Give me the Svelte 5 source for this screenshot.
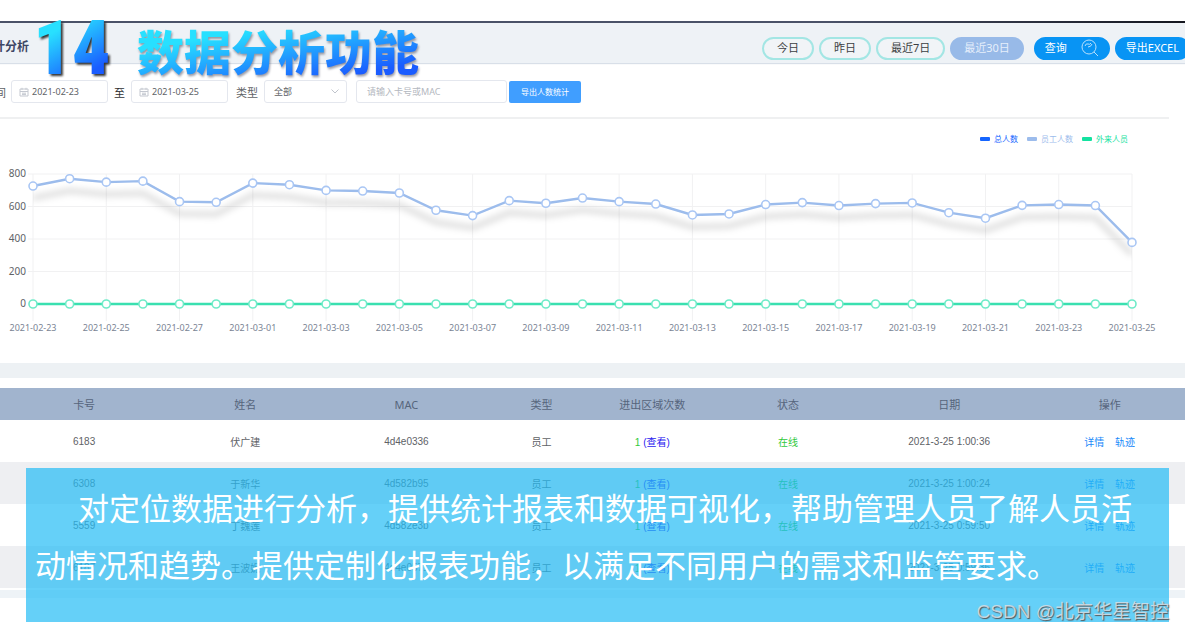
<script lang="ts">
  const ranges = ["今日", "昨日", "最近7日", "最近30日"];
  let activeRange = $state("最近30日");

  const legend = [
    { label: "总人数", color: "#1565ff" },
    { label: "员工人数", color: "#9cbcec" },
    { label: "外来人员", color: "#14e2a0" },
  ];

  const employees = [
    726, 771, 750, 756, 630, 626, 744, 734, 699, 695, 683, 577, 544, 636, 620,
    652, 630, 615, 548, 554, 612, 624, 606, 618, 622, 562, 528, 607, 612, 606,
    379,
  ];
  const visitors = employees.map(() => 0);
  const ticks = [800, 600, 400, 200, 0];

  const left = 33;
  const right = 1132;
  const top = 24;
  const bottom = 154;

  const x = (i: number) =>
    left + ((right - left) * i) / (employees.length - 1);
  const y = (value: number) => bottom - ((bottom - top) * value) / 800;
  const line = (values: number[]) =>
    values.map((v, i) => `${x(i)},${y(v)}`).join(" ");

  function dateLabel(i: number) {
    const date = new Date(Date.UTC(2021, 1, 23 + i));
    return date.toISOString().slice(0, 10);
  }

  const columns = [
    { title: "卡号", share: 14.2 },
    { title: "姓名", share: 13 },
    { title: "MAC", share: 14.2 },
    { title: "类型", share: 8.6 },
    { title: "进出区域次数", share: 10.1 },
    { title: "状态", share: 12.8 },
    { title: "日期", share: 14.4 },
    { title: "操作", share: 12.7 },
  ];
  const rows = [
    { card: "6183", name: "伏广建", mac: "4d4e0336", date: "2021-3-25 1:00:36" },
    { card: "6308", name: "于新华", mac: "4d582b95", date: "2021-3-25 1:00:24" },
    { card: "5559", name: "丁魏莲", mac: "4d582e3b", date: "2021-3-25 0:59:50" },
    { card: "6187", name: "王波妮", mac: "4d4e0571", date: "2021-3-25 0:59:36" },
  ];
</script>

{#snippet calendar()}
  <svg class="calendar" viewBox="0 0 10 10" aria-hidden="true">
    <path d="M1 2h8v7H1zM1 4.500h8M3 .8v2M7 .8v2M3 6.200h4M3 7.600h4" />
  </svg>
{/snippet}

<div class="page">
  <header class="topbar">
    <h1>统计分析</h1>
    <div class="actions">
      {#each ranges as range}
        <button
          type="button"
          class={["pill", activeRange === range && "active"]}
          onclick={() => (activeRange = range)}>{range}</button
        >
      {/each}
      <button type="button" class="pill primary search">
        查询
        <svg viewBox="0 0 18 18" aria-hidden="true">
          <circle cx="8" cy="8" r="7" />
          <path d="M13 13l4 4M4 7q1-3 3-2t3-1M7 8q3 0 4-3" />
        </svg>
      </button>
      <button type="button" class="pill primary export">导出EXCEL</button>
    </div>
  </header>

  <form class="filters" onsubmit={(e) => e.preventDefault()}>
    <label class="first" for="from">时间</label>
    <div class="field date">
      {@render calendar()}
      <input id="from" type="text" value="2021-02-23" />
    </div>
    <label class="to" for="until">至</label>
    <div class="field date">
      {@render calendar()}
      <input id="until" type="text" value="2021-03-25" />
    </div>
    <label class="type" for="type">类型</label>
    <div class="field kind">
      <select id="type">
        <option>全部</option>
      </select>
      <svg class="chevron" viewBox="0 0 8 5" aria-hidden="true">
        <path d="M.5.5 4 4 7.500.5" />
      </svg>
    </div>
    <div class="field keyword">
      <input type="text" placeholder="请输入卡号或MAC" aria-label="卡号或MAC" />
    </div>
    <button type="submit" class="count">导出人数统计</button>
  </form>

  <section class="chart">
    <ul class="legend">
      {#each legend as item}
        <li style:color={item.color}><i></i>{item.label}</li>
      {/each}
    </ul>
    <svg viewBox="0 0 1185 213" role="img" aria-label="人数趋势">
      <defs>
        <filter id="soft" x="-5%" y="-50%" width="110%" height="250%">
          <feGaussianBlur stdDeviation="3" />
        </filter>
        <clipPath id="plot">
          <rect x={left} y="0" width={right - left} height="180" />
        </clipPath>
      </defs>
      <g class="grid">
        {#each ticks as tick}
          <line x1={left - 5} x2={right} y1={y(tick)} y2={y(tick)} />
          <text x="26" y={y(tick) + 3} text-anchor="end">{tick}</text>
        {/each}
        {#each employees as _, i}
          {#if i % 2 === 0}
            <line x1={x(i)} x2={x(i)} y1={top} y2="171" />
            <text class="day" x={x(i)} y="181" text-anchor="middle"
              >{dateLabel(i)}</text
            >
          {/if}
        {/each}
      </g>
      <g clip-path="url(#plot)">
        <g filter="url(#soft)">
          <polyline
            class="shadow"
            points={line(employees)}
            transform="translate(0 12)"
          />
        </g>
      </g>
      <g class="series employees">
        <polyline points={line(employees)} />
        {#each employees as value, i}
          <circle cx={x(i)} cy={y(value)} r="4" />
        {/each}
      </g>
      <g class="series visitors">
        <polyline points={line(visitors)} />
        {#each visitors as value, i}
          <circle cx={x(i)} cy={y(value)} r="4" />
        {/each}
      </g>
    </svg>
  </section>

  <section class="records">
    <table>
      <colgroup>
        {#each columns as column}
          <col style:width="{column.share}%" />
        {/each}
      </colgroup>
      <thead>
        <tr>
          {#each columns as column}
            <th scope="col">{column.title}</th>
          {/each}
        </tr>
      </thead>
      <tbody>
        {#each rows as row}
          <tr>
            <td>{row.card}</td>
            <td>{row.name}</td>
            <td>{row.mac}</td>
            <td>员工</td>
            <td class="online">1 <a class="view" href="#view">(查看)</a></td>
            <td class="online">在线</td>
            <td>{row.date}</td>
            <td class="links">
              <a href="#detail">详情</a>
              <a href="#track">轨迹</a>
            </td>
          </tr>
        {/each}
      </tbody>
    </table>
  </section>

  <div class="banner">
    <span class="number">14</span>
    <h2>数据分析功能</h2>
  </div>

  <div class="caption">
    <p>
      对定位数据进行分析，提供统计报表和数据可视化，帮助管理人员了解人员活动情况和趋势。提供定制化报表功能，以满足不同用户的需求和监管要求。
    </p>
  </div>

  <div class="watermark">CSDN @北京华星智控</div>
</div>

<style>
  :global(body) {
    margin: 0;
    background: #fff;
  }

  .page {
    position: relative;
    min-height: 100vh;
    padding-top: 21px;
    box-sizing: border-box;
    overflow: hidden;
    color: #606266;
    font-family: "Noto Sans", "Noto Sans CJK SC", sans-serif;
  }

  button,
  input,
  select {
    font-family: inherit;
  }

  .topbar {
    display: flex;
    align-items: center;
    justify-content: space-between;
    height: 40px;
    background: #eef2f6;
    border-top: 2px solid;
    border-image: linear-gradient(90deg, #4a5268 70%, #14161f) 1;
    box-shadow: 0 1px 1px #d8dfe8;
  }
  h1 {
    margin: 0 0 0 -19px;
    padding-top: 8px;
    font-size: 12px;
    font-weight: 700;
    line-height: 20px;
    color: #3d4664;
  }
  .actions {
    display: flex;
    gap: 5px;
    margin-right: -5px;
    padding-top: 10px;
  }
  .pill {
    box-sizing: border-box;
    min-width: 52px;
    height: 23px;
    padding: 0 13px;
    border: 2px solid #a3e6e4;
    border-radius: 12px;
    background: #f1f4f7;
    color: #3c3f44;
    font-size: 11px;
    line-height: 18px;
    white-space: nowrap;
  }
  .pill.active {
    padding: 0 12px;
    background: #98bae8;
    border-color: #98bae8;
    color: #e6effb;
  }
  .pill.primary {
    background: #0894f4;
    border-color: #0894f4;
    color: #fff;
    padding: 0 9px;
  }
  .search {
    display: flex;
    align-items: center;
    gap: 14px;
    margin-left: 5px;
  }
  .search svg {
    width: 18px;
    height: 18px;
    fill: none;
    stroke: #b9e0fc;
  }

  .filters {
    display: flex;
    align-items: center;
    height: 51px;
    margin-right: 16px;
    padding-top: 3px;
    border-bottom: 2px solid #eff0f1;
    font-size: 11px;
  }
  label {
    color: #606266;
  }
  .first {
    margin: 0 5px 0 -16px;
  }
  .to {
    margin: 0 6px;
    color: #303133;
  }
  .type {
    margin: 0 6px 0 8px;
  }
  .field {
    display: flex;
    align-items: center;
    box-sizing: border-box;
    height: 23px;
    border: 1px solid #e4e7ee;
    border-radius: 3px;
    background: #fff;
  }
  .field input,
  .field select {
    width: 100%;
    min-width: 0;
    padding: 0;
    border: 0;
    outline: 0;
    background: none;
    color: #606266;
    font-size: 9px;
  }
  .field select {
    appearance: none;
  }
  .field input::placeholder {
    color: #b4b8c0;
  }
  .date {
    width: 97px;
    padding-left: 7px;
    gap: 3px;
  }
  .kind {
    width: 83px;
    padding: 0 7px 0 9px;
  }
  .keyword {
    width: 151px;
    margin: 0 2px 0 9px;
    padding-left: 10px;
  }
  .calendar {
    flex: none;
    width: 10px;
    height: 10px;
    fill: none;
    stroke: #c4c8d0;
  }
  .chevron {
    flex: none;
    width: 8px;
    height: 5px;
    fill: none;
    stroke: #c0c4cc;
  }
  .count {
    height: 22px;
    padding: 0 12px;
    border: 0;
    border-radius: 2px;
    background: #409eff;
    color: #fff;
    font-size: 8px;
  }

  .legend {
    display: flex;
    justify-content: flex-end;
    gap: 9px;
    margin: 0;
    padding: 14px 57px 0 0;
    list-style: none;
    font-size: 8px;
    line-height: 12px;
  }
  .legend li {
    display: flex;
    align-items: center;
    gap: 4px;
  }
  .legend i {
    width: 10px;
    height: 4px;
    border-radius: 1px;
    background: currentColor;
  }
  .chart > svg {
    display: block;
    width: 100%;
    margin-top: 5px;
  }
  .grid line {
    stroke: #f1f1f2;
  }
  .grid text {
    fill: #606266;
    font-size: 10px;
  }
  .grid .day {
    fill: #7a8494;
    font-size: 9px;
  }
  .shadow {
    fill: none;
    stroke: #000;
    stroke-width: 6;
    opacity: 0.12;
  }
  .series polyline {
    fill: none;
    stroke-width: 2.4;
  }
  .series circle {
    fill: #fff;
    stroke-width: 1.6;
  }
  .employees {
    stroke: #9cbcec;
  }
  .employees circle {
    stroke: #a9c6f4;
  }
  .visitors {
    stroke: #3ae0b0;
  }
  .visitors circle {
    stroke: #6febc8;
  }

  .records {
    padding: 10px 0 2px;
    border-top: 15px solid #edf1f4;
    border-bottom: 8px solid #eef3f7;
  }
  table {
    width: 100%;
    table-layout: fixed;
    border-collapse: collapse;
    text-align: center;
    font-family: "Liberation Sans", "Noto Sans CJK SC", sans-serif;
    font-size: 10px;
  }
  th {
    height: 32px;
    padding: 0;
    background: #a1b4ce;
    color: #56657c;
    font-family: "Noto Sans", "Noto Sans CJK SC", sans-serif;
    font-size: 11px;
    font-weight: 400;
  }
  td {
    height: 42px;
    padding: 0;
  }
  tbody tr:nth-child(even) {
    background: #eeeff2;
  }
  a {
    color: #1989fa;
    text-decoration: none;
  }
  .online {
    color: #2fc93a;
  }
  .view {
    color: #2a22f0;
  }
  .links a + a {
    margin-left: 8px;
  }

  .banner {
    position: absolute;
    top: 18px;
    left: 33px;
    display: flex;
    align-items: center;
    height: 60px;
  }
  .number,
  h2 {
    margin: 0;
    background-clip: text;
    color: transparent;
    white-space: nowrap;
  }
  .number {
    flex: 0 0 104px;
    background-image: linear-gradient(150deg, #28e0ff 25%, #1a5cff 70%);
    background-clip: text;
    font-family: Impact, "Roboto Condensed", "Open Sans Condensed", Roboto,
      sans-serif;
    font-size: 76px;
    font-weight: 900;
    line-height: 76px;
    filter: drop-shadow(2px 2px 1px #333);
  }
  h2 {
    padding-top: 4px;
    background-image: linear-gradient(170deg, #28e0ff 30%, #1a5cff 85%);
    background-clip: text;
    font-family: "Noto Sans CJK SC", sans-serif;
    font-size: 47px;
    font-weight: 900;
    line-height: 60px;
    filter: drop-shadow(1px 2px 1px rgba(60, 60, 80, 0.5));
  }

  .caption {
    position: absolute;
    right: 16px;
    bottom: 8px;
    left: 26px;
    box-sizing: border-box;
    height: 154px;
    padding: 10px 22px 0 9px;
    background: rgba(36, 188, 245, 0.7);
  }
  .caption p {
    margin: 0;
    color: #fff;
    font-family: "Noto Sans CJK SC", sans-serif;
    font-size: 31px;
    line-height: 57px;
    text-indent: 43px;
  }

  .watermark {
    position: absolute;
    right: 16px;
    bottom: 4px;
    color: rgba(215, 224, 232, 0.85);
    font-family: "Liberation Sans", "Noto Sans CJK SC", sans-serif;
    font-size: 19px;
    line-height: 28px;
    text-shadow: 1px 1px 1px #555;
  }
</style>
